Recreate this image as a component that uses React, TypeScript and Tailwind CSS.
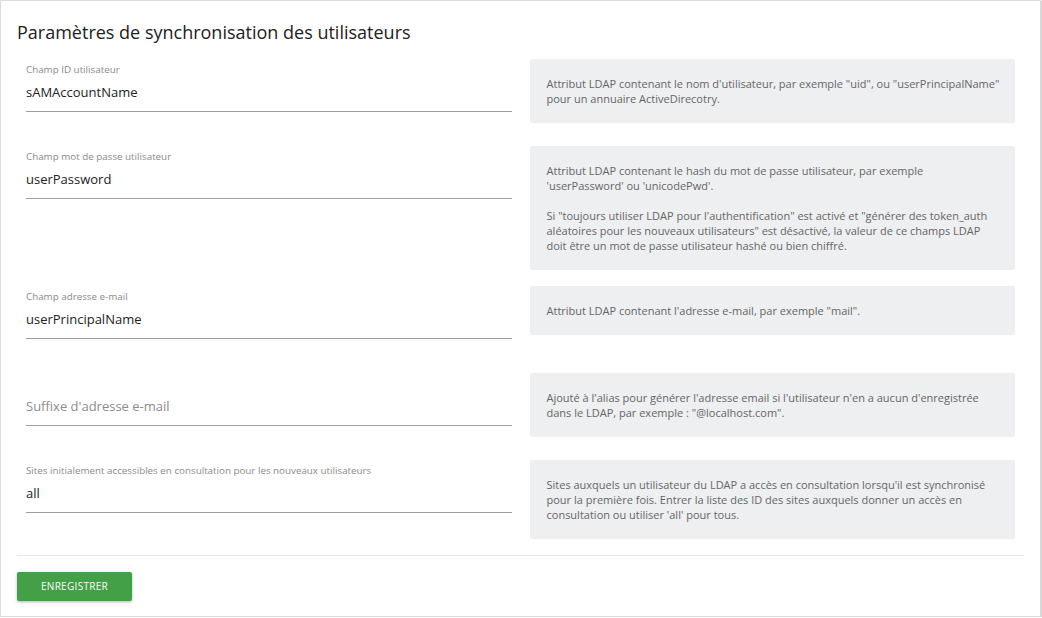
const rows = [
  {
    label: "Champ ID utilisateur",
    value: "sAMAccountName",
    help: [
      `Attribut LDAP contenant le nom d'utilisateur, par exemple "uid", ou "userPrincipalName" pour un annuaire ActiveDirecotry.`,
    ],
  },
  {
    label: "Champ mot de passe utilisateur",
    value: "userPassword",
    help: [
      "Attribut LDAP contenant le hash du mot de passe utilisateur, par exemple 'userPassword' ou 'unicodePwd'.",
      `Si "toujours utiliser LDAP pour l'authentification" est activé et "générer des token_auth aléatoires pour les nouveaux utilisateurs" est désactivé, la valeur de ce champs LDAP doit être un mot de passe utilisateur hashé ou bien chiffré.`,
    ],
  },
  {
    label: "Champ adresse e-mail",
    value: "userPrincipalName",
    help: [`Attribut LDAP contenant l'adresse e-mail, par exemple "mail".`],
  },
  {
    label: "",
    value: "",
    placeholder: "Suffixe d'adresse e-mail",
    help: [
      `Ajouté à l'alias pour générer l'adresse email si l'utilisateur n'en a aucun d'enregistrée dans le LDAP, par exemple : "@localhost.com".`,
    ],
  },
  {
    label: "Sites initialement accessibles en consultation pour les nouveaux utilisateurs",
    value: "all",
    help: [
      "Sites auxquels un utilisateur du LDAP a accès en consultation lorsqu'il est synchronisé pour la première fois. Entrer la liste des ID des sites auxquels donner un accès en consultation ou utiliser 'all' pour tous.",
    ],
  },
];

function Field({ label, value, placeholder }: { label: string; value: string; placeholder?: string }) {
  return (
    <div className="h-[71px]">
      <div className="h-[17px] pt-[5px] text-[9.8px] leading-[12px] text-[#8a8a8a]">{label}</div>
      <div className="border-b border-[#9e9e9e] pt-[6px] pb-[9px] text-[13px] leading-[20px]">
        {value ? <span className="text-[#222]">{value}</span> : <span className="text-[#8c8c8c]">{placeholder}</span>}
      </div>
    </div>
  );
}

export default function App() {
  return (
    <div className="bg-white font-['Open_Sans',sans-serif]">
      <div className="w-[1041px] border border-[#dcdcdc] shadow-[1px_1px_1px_rgba(0,0,0,0.18)] px-[16px] pt-[19px] pb-[15px]">
        <h2 className="text-[18px] leading-[24px] text-[#212121]">Paramètres de synchronisation des utilisateurs</h2>
        <div className="mt-[15px] flex flex-col gap-[16px]">
          {rows.map((r) => (
            <div key={r.help[0]} className="grid grid-cols-2 items-start">
              <div className="px-[9px]">
                <Field label={r.label} value={r.value} placeholder={r.placeholder} />
              </div>
              <div className="px-[9px]">
                <div className="flex flex-col gap-[15px] rounded-[2px] bg-[#eeeff1] py-[17px] pl-[17px] pr-[14px] text-[11px] leading-[15px] text-[#666]">
                  {r.help.map((p) => (
                    <p key={p}>{p}</p>
                  ))}
                </div>
              </div>
            </div>
          ))}
        </div>
        <div className="mt-[16px] border-t border-[#e6e6e6] pt-[16px]">
          <button className="h-[29px] w-[115px] rounded-[2px] bg-[#43a047] text-[10px] tracking-[0.3px] text-white shadow-[0_1px_3px_rgba(0,0,0,0.3)]">
            ENREGISTRER
          </button>
        </div>
      </div>
    </div>
  );
}
